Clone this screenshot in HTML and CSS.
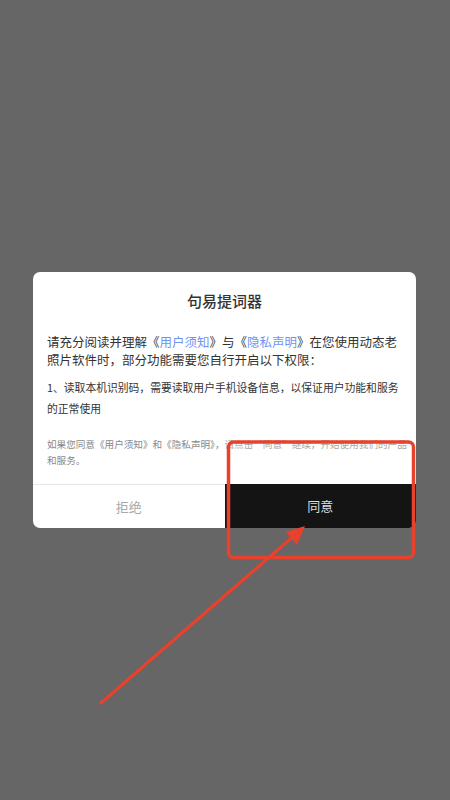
FILE: index.html
```html
<!DOCTYPE html>
<html lang="zh">
<head>
<meta charset="utf-8">
<link rel="stylesheet" href="styles.css">
</head>
<body>
<div class="screen">
  <div class="dialog">
    <h1 class="title">句易提词器</h1>
    <p class="intro">请充分阅读并理解《<a class="link">用户须知</a>》与《<a class="link">隐私声明</a>》在您使用动态老<br>照片软件时，部分功能需要您自行开启以下权限：</p>
    <p class="perm">1、读取本机识别码，需要读取用户手机设备信息，以保证用户功能和服务<br>的正常使用</p>
    <p class="note">如果您同意《用户须知》和《隐私声明》，<span class="faded">请点击“同意”继续，开始使用我们的产品</span><br>和服务。</p>
    <div class="actions">
      <div class="btn reject">拒绝</div>
      <div class="btn agree">同意</div>
    </div>
  </div>
  <svg class="annot" width="450" height="800" viewBox="0 0 450 800">
    <rect x="228.5" y="442" width="185" height="115.5" rx="5" fill="none" stroke="#e8412c" stroke-width="3.5"/>
    <line x1="101" y1="703" x2="296" y2="534" stroke="#e8412c" stroke-width="3.2" stroke-linecap="round"/>
    <polygon points="305,526 286,532 297,545" fill="#e8412c"/>
  </svg>
</div>
</body>
</html>
```
FILE: styles.css
```css
* { box-sizing: border-box; }
html, body { margin: 0; padding: 0; }
body {
  width: 450px;
  height: 800px;
  background: #666666;
  font-family: "Noto Sans CJK SC", "Noto Sans", sans-serif;
  overflow: hidden;
}
.screen {
  position: relative;
  width: 450px;
  height: 800px;
  display: flex;
  align-items: center;
  justify-content: center;
  padding-right: 1px;
}
.dialog {
  width: 383px;
  background: #ffffff;
  border-radius: 7px;
  overflow: hidden;
  display: flex;
  flex-direction: column;
  margin-top: -1px;
}
.title {
  margin: 0;
  padding-top: 18px;
  font-size: 15px;
  font-weight: 500;
  line-height: 22px;
  text-align: center;
  color: #333333;
}
.intro {
  margin: 21px 0 0;
  padding: 0 14px;
  font-size: 12.5px;
  line-height: 18px;
  color: #333333;
  white-space: nowrap;
}
.link { color: #6f93f5; }
.perm {
  margin: 8px 0 0;
  padding: 0 14px;
  font-size: 10.8px;
  line-height: 21.5px;
  color: #333333;
  white-space: nowrap;
}
.note {
  margin: 16px 0 0;
  padding: 0 14px;
  font-size: 9.6px;
  line-height: 16px;
  color: #888888;
  white-space: nowrap;
}
.faded { color: #a8a8a8; }
.actions {
  margin-top: 16px;
  border-top: 1px solid #e6e6e6;
  display: flex;
  height: 44px;
}
.btn {
  flex: 1;
  display: flex;
  align-items: center;
  justify-content: center;
  font-size: 13px;
}
.reject { color: #aaaaaa; }
.agree {
  background: #141414;
  color: #dddddd;
  margin-top: -1px;
}
.annot {
  position: absolute;
  left: 0;
  top: 0;
  pointer-events: none;
}
```
